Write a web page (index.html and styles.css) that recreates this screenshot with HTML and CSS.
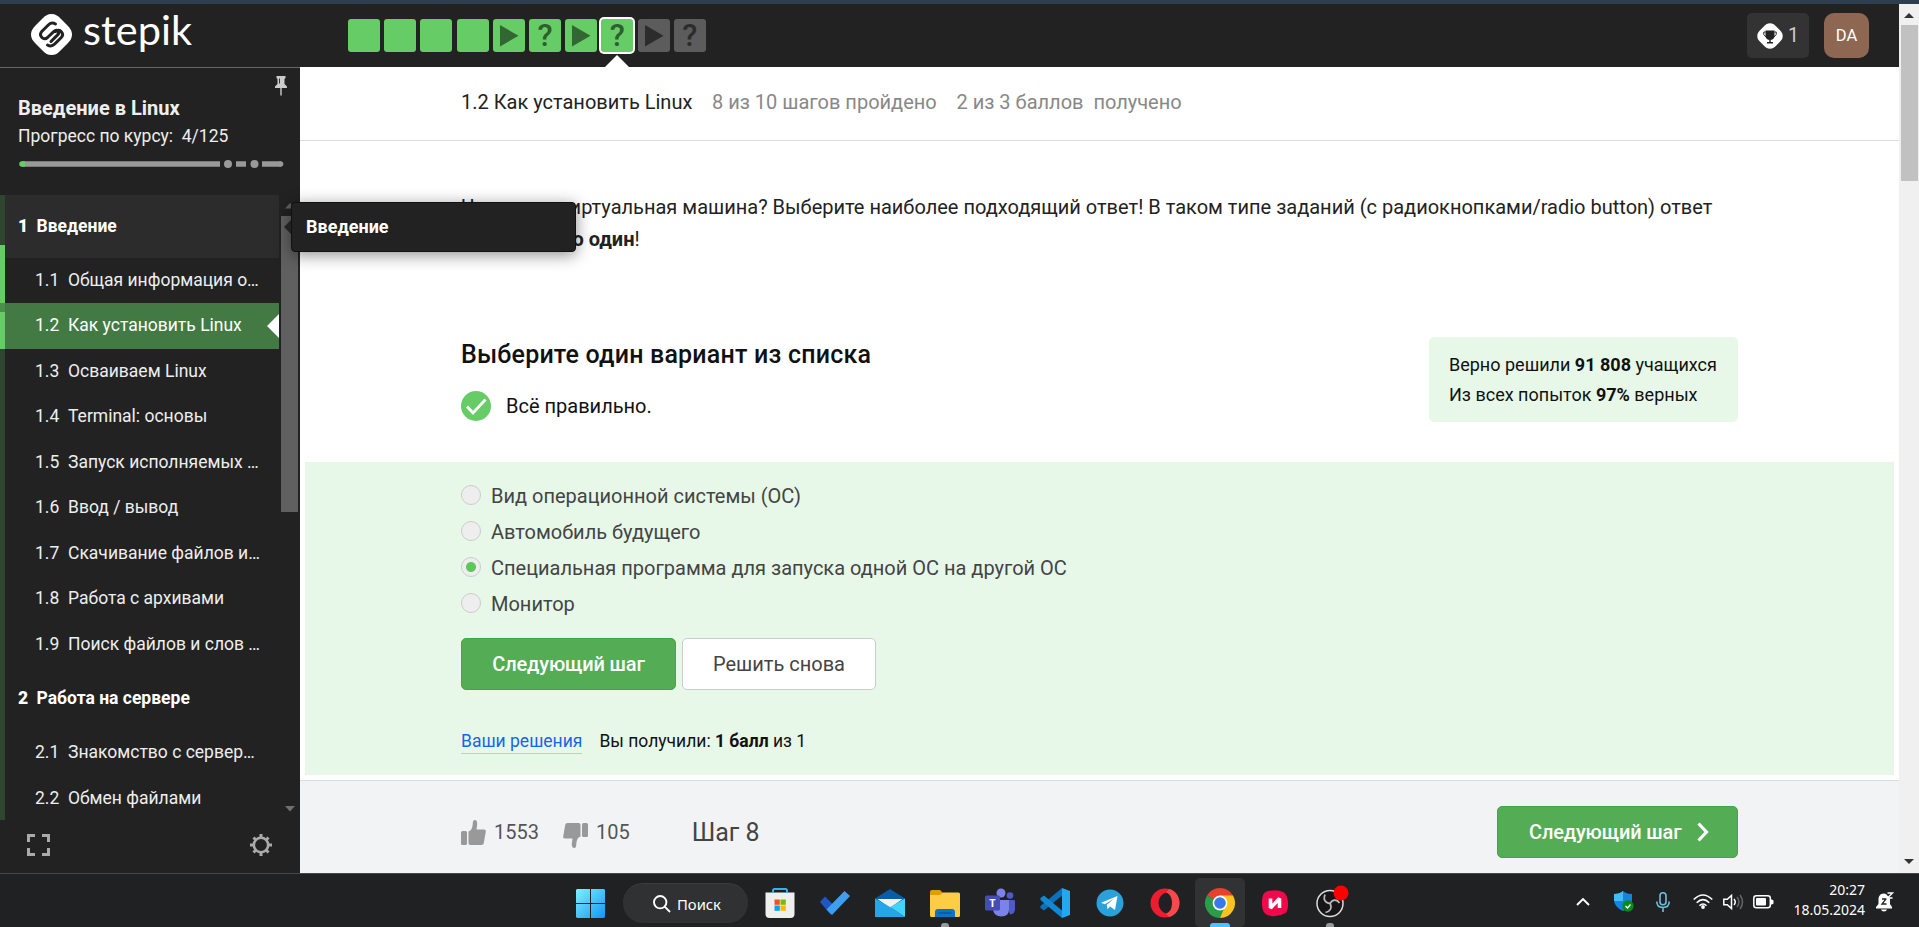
FILE: index.html
```html
<!DOCTYPE html>
<html lang="ru">
<head>
<meta charset="utf-8">
<title>Как установить Linux — Stepik</title>
<link rel="stylesheet" href="styles.css">
</head>
<body>
<div class="strip"></div>
<div class="window">
  <div class="app">
    <header class="topbar">
      <svg class="logo" width="180" height="56" viewBox="0 0 180 56">
        <g transform="translate(0 4)"><path d="M20.500 0c4 0 6 1.500 9 4.500l6.500 6.500c3 3 5 5.500 5 9.500s-2 6.500-5 9.500l-6.500 6.500c-3 3-5 4.500-9 4.500s-6-1.500-9-4.500l-6.500-6.500c-3-3-5-5.500-5-9.500s2-6.500 5-9.500l6.500-6.500c3-3 5-4.500 9-4.500z" fill="#fff"/>
        <path d="M24.500 10c-2.500-1.500-5.200-1-7.200 1l-6.300 6.300c-4 4.200 1.300 9.800 5.500 6.200l6.500-6.200c3-2.700 6.300.8 3.600 3.600l-6.600 6.600M16.500 31c2.500 1.500 5.200 1 7.200-1l6.300-6.300c4-4.200-1.300-9.800-5.500-6.200" fill="none" stroke="#222" stroke-width="3" stroke-linecap="round"/></g>
        <text class="wordmark" x="52" y="34.500" textLength="109" lengthAdjust="spacingAndGlyphs">stepik</text>
      </svg>
      <nav class="steps">
        <a class="step"></a><a class="step"></a><a class="step"></a><a class="step"></a>
        <a class="step"><svg width="32" height="33"><path d="M7 6v21.500L25.500 16.700z"/></svg></a>
        <a class="step">?</a>
        <a class="step"><svg width="32" height="33"><path d="M7 6v21.500L25.500 16.700z"/></svg></a>
        <a class="step current">?</a>
        <a class="step locked"><svg width="32" height="33"><path d="M7 6v21.500L25.500 16.700z"/></svg></a>
        <a class="step locked">?</a>
      </nav>
      <div class="account">
        <div class="score">
          <svg width="26" height="26" viewBox="0 0 26 26"><path d="M13 .3c2.500 0 4 1 5.500 2.500l4.700 4.700c1.500 1.500 2.500 3 2.500 5.500s-1 4-2.500 5.500l-4.700 4.700c-1.500 1.500-3 2.500-5.500 2.500s-4-1-5.500-2.500l-4.700-4.700C1.300 17 .3 15.500.3 13s1-4 2.500-5.500l4.700-4.700C9 1.300 10.500.3 13 .3z" fill="#fff"/><path d="M8.500 7.500h9v5c0 3-2 4.500-4.500 4.500s-4.500-1.500-4.500-4.500zM12.300 16h1.400v3h-1.400zM10 19h6v1.500h-6z" fill="#222"/><path d="M8.500 9H6.800v2.500L9 14M17.500 9h1.700v2.500L17 14" fill="none" stroke="#222"/></svg>
          <span>1</span>
        </div>
        <div class="avatar">DA</div>
      </div>
    </header>
    <div class="body">
      <aside class="sidebar">
        <div class="course">
          <svg class="pin" width="12" height="20" viewBox="0 0 12 20"><path d="M1.500 0h9v2l-1 1v5l2.500 2.500V12H0v-1.500L2.500 8V3l-1-1z" fill="#ccc"/><path d="M4.500 2.500v5" stroke="#333"/><path d="M6 12v7.500" stroke="#999" stroke-width="2"/></svg>
          <div class="course-title">Введение в Linux</div>
          <div class="course-progress">Прогресс по курсу: &nbsp;4/125</div>
          <svg class="bar" width="265" height="8"><path d="M3 4h198M217 4h10M243 4h19" stroke="#999" stroke-width="5.500"/><circle cx="3" cy="4" r="2.800" fill="#66cc66"/><circle cx="261.500" cy="4" r="2.800" fill="#999"/><path d="M3 4h3" stroke="#66cc66" stroke-width="5.500"/><circle cx="209" cy="4" r="4" fill="#999"/><circle cx="235.500" cy="4" r="4" fill="#999"/></svg>
        </div>
        <div class="toc">
          <div class="toc-list">
            <div class="section open"><b>1</b>Введение</div>
            <div class="lesson"><span>1.1</span>Общая информация о…</div>
            <div class="lesson active"><span>1.2</span>Как установить Linux</div>
            <div class="lesson"><span>1.3</span>Осваиваем Linux</div>
            <div class="lesson"><span>1.4</span>Terminal: основы</div>
            <div class="lesson"><span>1.5</span>Запуск исполняемых …</div>
            <div class="lesson"><span>1.6</span>Ввод / вывод</div>
            <div class="lesson"><span>1.7</span>Скачивание файлов и…</div>
            <div class="lesson"><span>1.8</span>Работа с архивами</div>
            <div class="lesson"><span>1.9</span>Поиск файлов и слов …</div>
            <div class="section"><b>2</b>Работа на сервере</div>
            <div class="lesson"><span>2.1</span>Знакомство с сервер…</div>
            <div class="lesson"><span>2.2</span>Обмен файлами</div>
            <i class="mark first"></i><i class="mark second"></i>
          </div>
          <div class="toc-scroll">
            <svg width="10" height="6"><path d="M0 5.500L5 0l5 5.500z" fill="#606060"/></svg>
            <div class="toc-thumb"></div>
            <svg width="10" height="6"><path d="M0 0h10L5 5.500z" fill="#707070"/></svg>
          </div>
        </div>
        <div class="tools">
          <svg width="23" height="22" viewBox="0 0 23 22"><path d="M1.500 8V1.500H8M15 1.500h6.500V8M21.500 14v6.500H15M8 20.500H1.500V14" fill="none" stroke="#aaa" stroke-width="3"/></svg>
          <svg width="22" height="22" viewBox="0 0 22 22"><g fill="none" stroke="#aaa"><circle cx="11" cy="11" r="7.200" stroke-width="2.600"/><path stroke-width="3" d="M11 3.500V0M11 18.500V22M3.500 11H0M18.500 11H22M5.700 5.700L3.500 3.500M16.300 5.700l2.200-2.200M5.700 16.300l-2.200 2.200M16.300 16.300l2.200 2.200"/></g></svg>
        </div>
        <div class="tooltip">Введение</div>
      </aside>
      <main class="main">
        <div class="lesson-head">
          <span class="lesson-name">1.2 Как установить Linux</span>
          <span class="stat-a">8 из 10 шагов пройдено</span>
          <span>2 из 3 баллов &nbsp;получено</span>
        </div>
        <p class="question">Что такое виртуальная машина? Выберите наиболее подходящий ответ! В таком типе заданий (с радиокнопками/radio button) ответ<br>будет <b>только один</b>!</p>
        <div class="task">
          <div>
            <h2 class="task-title">Выберите один вариант из списка</h2>
            <div class="verdict">
              <svg width="30" height="30"><circle cx="15" cy="15" r="15" fill="#66cc66"/><path d="M6 15.500l6 6.500L24.500 8.500" fill="none" stroke="#fff" stroke-width="2.800"/></svg>
              <span>Всё правильно.</span>
            </div>
          </div>
          <div class="stats">Верно решили <b>91 808</b> учащихся<br>Из всех попыток <b>97%</b> верных</div>
        </div>
        <div class="answer">
          <label class="option"><i class="radio"></i>Вид операционной системы (ОС)</label>
          <label class="option"><i class="radio"></i>Автомобиль будущего</label>
          <label class="option"><i class="radio on"></i>Специальная программа для запуска одной ОС на другой ОС</label>
          <label class="option"><i class="radio"></i>Монитор</label>
          <div class="buttons">
            <button class="btn primary first-btn">Следующий шаг</button>
            <button class="btn plain">Решить снова</button>
          </div>
          <div class="result"><a class="link">Ваши решения</a><span>Вы получили: <b>1 балл</b> из 1</span></div>
        </div>
        <footer class="foot">
          <svg width="25" height="25" viewBox="0 0 25 25" fill="#999"><rect y="11" width="6" height="14" rx="1.500"/><path d="M7.500 11.500c3-1 4-4 4.200-7.500C11.800 1 12.500 0 13.700 0c2 0 2.700 2 2.500 4.500L15.500 9.500H23c1.500 0 2 1 1.800 2l-2 11.500c-.3 1.200-1 2-2.300 2H9.500c-1.300 0-2-.7-2-2z"/></svg>
          <span class="votes up">1553</span>
          <svg width="25" height="25" viewBox="0 0 25 25" fill="#999" class="down"><rect y="11" width="6" height="14" rx="1.500"/><path d="M7.500 11.500c3-1 4-4 4.200-7.500C11.800 1 12.500 0 13.700 0c2 0 2.700 2 2.500 4.500L15.500 9.500H23c1.500 0 2 1 1.800 2l-2 11.500c-.3 1.200-1 2-2.300 2H9.500c-1.300 0-2-.7-2-2z"/></svg>
          <span class="votes">105</span>
          <span class="step-no">Шаг 8</span>
          <button class="btn primary next">Следующий шаг<svg width="12" height="20" viewBox="0 0 12 20"><path d="M1.500 1.500L9.500 10l-8 8.500" fill="none" stroke="#fff" stroke-width="3.200"/></svg></button>
        </footer>
      </main>
    </div>
  </div>
  <div class="page-scroll">
    <svg width="10" height="5"><path d="M0 5L5 0l5 5z" fill="#333"/></svg>
    <div class="page-thumb"></div>
    <svg width="10" height="5"><path d="M0 0h10L5 5z" fill="#333"/></svg>
  </div>
</div>
<div class="taskbar">
  <svg class="start" width="29" height="29" viewBox="0 0 29 29"><defs><linearGradient id="w" x2="1" y2="1"><stop offset="0" stop-color="#7ff0ff"/><stop offset="1" stop-color="#1296f3"/></linearGradient></defs><path d="M1 0h13v14H0V1zM15 0h13l1 1v13H15zM0 15h14v14H1l-1-1zM15 15h14v13l-1 1H15z" fill="url(#w)"/></svg>
  <div class="search"><svg width="18" height="18" viewBox="0 0 18 18"><g fill="none" stroke="#fff" stroke-width="1.900"><circle cx="7.200" cy="7.200" r="6.200"/><path d="M11.700 11.700l5.300 5.300"/></g></svg>Поиск</div>
  <div class="apps">
    <div class="app-cell"><svg width="30" height="30" viewBox="0 0 30 30"><path d="M.5 4.500h29V26q0 4-4 4H4.500q-4 0-4-4z" fill="#efefef"/><path d="M8 5V2.500Q8 1 9.500 1h11Q22 1 22 2.500V5" fill="none" stroke="#31b5f0" stroke-width="2"/><path d="M9.500 11.500h5.300v5.300H9.500z" fill="#f25022"/><path d="M15.500 11.500h5.300v5.300h-5.300z" fill="#7fba00"/><path d="M9.500 17.500h5.300v5.300H9.500z" fill="#00a4ef"/><path d="M15.500 17.500h5.300v5.300h-5.300z" fill="#ffb900"/></svg></div>
    <div class="app-cell"><svg width="30" height="30" viewBox="0 0 30 30"><path d="M0 14l5-5.500 9 9-3.500 9z" fill="#1d58c4"/><path d="M12 27l-5.500-5.500L24.500 3 30 8z" fill="#3e9ff0"/></svg></div>
    <div class="app-cell"><svg width="30" height="30" viewBox="0 0 30 30"><path d="M0 10.500L15 1l15 9.500v5H0z" fill="#0a5ba8"/><path d="M2.500 11h25L15 20z" fill="#f2f2f2"/><path d="M0 10.500L15 19l15 10H0z" fill="#25a6e8"/><path d="M30 10.500V29L15 19z" fill="#43d2f8"/></svg></div>
    <div class="app-cell open-app"><svg width="30" height="30" viewBox="0 0 30 30"><path d="M0 4q0-2 2-2h8l3 3v8H0z" fill="#e19c0b"/><path d="M0 7h10l3-2.500h15.500q1.500 0 1.500 1.500v21.500q0 1.500-1.500 1.500h-27Q0 29 0 27.500z" fill="#fdce45"/><path d="M5 29v-5q0-3 3-3h14q3 0 3 3v5z" fill="#0b75c5"/><path d="M8.500 25h13" stroke="#064f93" stroke-width="1.300"/></svg></div>
    <div class="app-cell"><svg width="30" height="30" viewBox="0 0 30 30"><circle cx="25" cy="7.500" r="3.300" fill="#5059c9"/><path d="M20 12h9q1 0 1 1v8q0 5-5 5.500z" fill="#5059c9"/><circle cx="16" cy="5" r="4.500" fill="#7b83eb"/><path d="M8 12h16v10q-.5 6.500-7.500 6.500T8 22z" fill="#7b83eb"/><rect y="7.500" width="15" height="15" rx="1.500" fill="#454cb2"/><text x="7.500" y="19" text-anchor="middle" class="teams-t">T</text></svg></div>
    <div class="app-cell"><svg width="30" height="30" viewBox="0 0 30 30"><path d="M22 7.500L4 22.500.5 20v-2L22 0z" fill="#0a72bd"/><path d="M22 22.500L4 7.500.5 10v2L22 30z" fill="#1088d4"/><path d="M22 0l8 3v24l-8 3z" fill="#24a6f0"/></svg></div>
    <div class="app-cell"><svg width="30" height="30" viewBox="0 0 30 30"><circle cx="15" cy="15" r="13.500" fill="#2aa1da"/><path d="M6 14.700L22.500 8 20 22l-5-3.500-2.500 2.700-.7-4.500 7-6-9 5.500z" fill="#fff"/></svg></div>
    <div class="app-cell"><svg width="30" height="30" viewBox="0 0 30 30"><path fill-rule="evenodd" d="M15 .5a14.500 14.500 0 100 29 14.500 14.500 0 000-29zm2 4c3.500 0 5.500 4.500 5.500 10.500s-2 10.500-5.500 10.500S8.500 21 8.500 15 13.500 4.500 17 4.500z" fill="#ed1c2e"/><path d="M19 1c14 3 14 25 0 28l-3-3.500c8-2 8-19 0-21z" fill="#f9484d"/></svg></div>
    <div class="app-cell focused"><svg width="30" height="30" viewBox="0 0 30 30"><path d="M15 15L2 7.500A15 15 0 0128 7.500z" fill="#e8402f"/><path d="M15 15L2 7.500A15 15 0 0015 30l6.500-11z" fill="#2b9c4a"/><path d="M15 15h6.500L15 30A15 15 0 0028 7.500H15z" fill="#fcc31e"/><circle cx="15" cy="15" r="7.400" fill="#fff"/><circle cx="15" cy="15" r="5.800" fill="#3879ea"/></svg></div>
    <div class="app-cell"><svg width="26" height="26" viewBox="0 0 26 26"><path d="M7 .8Q16-.8 22 2.500q3.500 3 4 10t-2.500 10.500Q17 27 9 26 2 25 .6 19T.5 7Q1.500 1.500 7 .8z" fill="#f0094b"/><path d="M8.500 8.500v9.500L17.500 8.500V18" fill="none" stroke="#fff" stroke-width="3.600" stroke-linejoin="bevel"/></svg></div>
    <div class="app-cell open-app"><svg class="obs" width="30" height="30" viewBox="0 0 30 30"><circle cx="15" cy="15.500" r="13" fill="#171517" stroke="#ddd" stroke-width="1.500"/><path d="M15 15.500c-5-.5-7-4-5-9M15 15.500c2.500-4.500 7-4.500 9.500-.5M15 15.500c2.500 4.500 0 8-4.500 9" fill="none" stroke="#bbb" stroke-width="1.700"/><circle cx="26" cy="5" r="7.500" fill="#f00"/></svg></div>
  </div>
  <div class="tray">
    <svg width="14" height="9"><path d="M1 8l6-6 6 6" fill="none" stroke="#fff" stroke-width="1.900"/></svg>
    <svg class="t-shield" width="20" height="21" viewBox="0 0 20 21"><path d="M0 3q6 0 9-3 3 3 9 3v6q0 7-9 11Q0 16 0 9z" fill="#1683dd"/><path d="M0 3q6 0 9-3v10H0z" fill="#42bcf5"/><circle cx="14" cy="15" r="5.700" fill="#0b8a1c"/><path d="M11.500 15l2 2 3-3.500" fill="none" stroke="#fff" stroke-width="1.300"/></svg>
    <svg class="t-mic" width="14" height="20" viewBox="0 0 14 20"><g fill="none" stroke="#6ec1dc" stroke-width="1.600"><rect x="4" y=".8" width="6" height="12" rx="3"/><path d="M.8 9.500q0 6 6.200 6t6.200-6M7 15.500V20"/></g></svg>
    <svg class="t-wifi" width="20" height="15" viewBox="0 0 20 15"><g fill="none" stroke="#fff" stroke-width="1.600"><path d="M.7 5.500q9.300-9 18.600 0M3.700 8.700q6.300-6.200 12.600 0M6.500 11.700q3.500-3.500 7 0"/></g><circle cx="10" cy="13" r="1.900" fill="#fff"/></svg>
    <svg class="t-sound" width="20" height="16" viewBox="0 0 20 16"><g fill="none" stroke-width="1.500"><path d="M.8 5.300h3.500L8.500 1.500v13l-4.200-3.800H.8z" stroke="#fff"/><path d="M11 5q2.500 3 0 6" stroke="#fff"/><path d="M14 3q4 5 0 10M17 1q5 7 0 14" stroke="#666"/></g></svg>
    <svg class="t-battery" width="21" height="14" viewBox="0 0 21 14"><rect x=".8" y=".8" width="16.500" height="12" rx="2.500" fill="none" stroke="#fff" stroke-width="1.500"/><rect x="3" y="3" width="10" height="7.600" rx="1" fill="#fff"/><path d="M18 4.500h1l1.500 1v3L19 9.500h-1z" fill="#fff"/></svg>
    <div class="clock">20:27<br>18.05.2024</div>
    <svg class="t-bell" width="19" height="20" viewBox="0 0 19 20"><path d="M8 1.500c-4 0-5.500 3-5.500 6V12L0 15v1.500h16V15l-2-3V6.500L10 2zM5 17.500h6q-.5 2-3 2t-3-2z" fill="#fff"/><path d="M6 7h4l-4 5h4.500" fill="none" stroke="#222" stroke-width="1.300"/><path d="M11.500 1h5l-5 5h5" fill="none" stroke="#fff" stroke-width="1.400"/></svg>
  </div>
</div>
</body>
</html>
```
FILE: styles.css
```css
* { box-sizing: border-box; }
body { margin: 0; width: 1919px; height: 927px; overflow: hidden; display: flex; flex-direction: column; font-family: Roboto, "Noto Sans", sans-serif; background: #fff; color: #222; }
svg { display: block; flex: none; overflow: visible; }
.strip { height: 4px; background: #2c3e50; }
.window { height: 869px; display: flex; }
.app { width: 1899px; display: flex; flex-direction: column; }

.topbar { height: 63px; background: #222; display: flex; align-items: flex-start; padding: 6px 30px 0 31px; }
.wordmark { font-family: Lato, sans-serif; font-size: 40px; fill: #fff; }
.steps { display: flex; gap: 4.200px; margin: 9px 0 0 137px; }
.step { position: relative; width: 32px; height: 33px; border-radius: 3px; background: #66cc66; color: #2d5f2f; fill: #336633; font-size: 31px; font-weight: 500; line-height: 34px; text-align: center; }
.step.current { box-shadow: 0 0 0 2px #fff; }
.step.current::after { content: ""; position: absolute; left: 4px; top: 36px; border: 12px solid transparent; border-top: 0; border-bottom-color: #fff; }
.step.locked { background: #5c5c5c; color: #2c2c2c; fill: #2c2c2c; }
.account { margin: 3px 0 0 auto; display: flex; gap: 15px; }
.score { width: 62px; height: 45px; border-radius: 5px; background: #333; display: flex; align-items: center; padding-left: 10px; gap: 5px; color: #ccc; font-size: 19.500px; }
.avatar { width: 45px; height: 45px; border-radius: 10px; background: #8d6752; color: #fff; font-size: 16.500px; line-height: 46px; text-align: center; }

.body { height: 806px; display: flex; }
.sidebar { position: relative; width: 300px; background: #222; color: #eee; display: flex; flex-direction: column; border-top: 1px solid #666; }
.course { height: 127px; padding: 27px 0 0 18px; position: relative; }
.pin { position: absolute; left: 275px; top: 8px; }
.course-title { font-size: 20px; font-weight: 700; line-height: 26px; }
.course-progress { font-size: 17.500px; line-height: 28px; margin-top: 1px; }
.bar { margin: 10px 0 0 1px; }
.toc { height: 625px; display: flex; }
.toc-list { position: relative; width: 279px; overflow: hidden; padding-left: 5px; background: linear-gradient(90deg, #30452f 5px, transparent 5px); font-size: 17.500px; }
.section { height: 63px; line-height: 62px; padding-left: 13px; font-weight: 700; color: #fff; display: flex; white-space: nowrap; }
.section b { width: 18.500px; }
.section.open { height: 62.600px; background: #2c2c2c; }
.lesson { height: 45.500px; line-height: 45px; padding-left: 30px; display: flex; white-space: nowrap; position: relative; }
.lesson span { width: 33px; }
.lesson.active { background: #437a43; color: #fff; }
.lesson.active::after { content: ""; position: absolute; right: 0; top: 11px; border: 12px solid transparent; border-left: 0; border-right-color: #fff; }
.mark { position: absolute; left: 0; width: 5px; background: #66cc66; }
.mark.first { top: 50px; height: 58px; }
.mark.second { top: 117px; height: 37px; box-shadow: 0 -9px #4a8f4a; }
.toc-scroll { width: 21px; display: flex; flex-direction: column; align-items: center; padding: 8px 0; }
.toc-thumb { width: 17px; height: 296px; background: #606060; margin: 7px 0 auto; }
.tools { display: flex; justify-content: space-between; padding: 14px 28px 0 27px; }
.tooltip { position: absolute; left: 291px; top: 134px; width: 285px; height: 50px; border-radius: 4px; border: 1px solid #111; background: #222; color: #fff; font-size: 18px; font-weight: 700; line-height: 48px; padding-left: 14px; box-shadow: 0 3px 16px rgba(0,0,0,.45); z-index: 2; }
.tooltip::before { content: ""; position: absolute; left: -8px; top: 17px; border: 7px solid transparent; border-left: 0; border-right-color: #222; }

.main { width: 1599px; display: flex; flex-direction: column; background: #fff; }
.lesson-head { height: 74px; border-bottom: 1px solid #ddd; padding-left: 161px; display: flex; line-height: 70px; font-size: 20px; color: #888; white-space: pre; }
.lesson-name { width: 251px; color: #222; }
.stat-a { width: 244.500px; }
.question { margin: 50px 0 0 161px; font-size: 20px; line-height: 32px; height: 64px; white-space: nowrap; }
.task { display: flex; justify-content: space-between; margin-top: 82px; padding: 0 161px; height: 125px; }
.task-title { margin: 0; font-size: 25px; font-weight: 500; line-height: 36px; letter-spacing: .2px; color: #111; }
.verdict { display: flex; align-items: center; gap: 15px; margin-top: 18px; font-size: 20px; color: #111; }
.stats { width: 309px; height: 85px; background: #e7f8e9; border-radius: 5px; padding: 13px 0 0 20px; font-size: 18px; line-height: 30px; color: #111; white-space: nowrap; }
.answer { margin: 0 5px; height: 313px; background: #e7f8e9; padding: 16px 0 0 156px; }
.option { height: 36px; display: flex; align-items: center; font-size: 20px; color: #444; }
.radio { width: 20px; height: 20px; border: 1px solid #ccc; border-radius: 50%; background: #eee; margin: -2px 10px 0 0; }
.radio.on { background: radial-gradient(circle, #5bc85b 4.500px, #eee 5.500px); }
.buttons { display: flex; gap: 6px; margin-top: 16px; }
.btn { height: 52px; border: 1px solid #3fa845; border-radius: 5px; font: 20px Roboto, sans-serif; padding: 0; text-align: center; }
.primary { background: #54ad54; color: #fff; font-weight: 500; letter-spacing: -.15px; }
.first-btn { width: 215px; }
.plain { width: 194px; border-color: #ccc; background: #fff; color: #444; }
.result { display: flex; gap: 17px; margin-top: 39px; font-size: 17.500px; line-height: 24px; color: #111; }
.link { color: #1665e8; border-bottom: 1px solid #a9d3f5; }
.foot { margin-top: 5px; height: 93px; border-top: 1px solid #ddd; background: #f2f3f5; display: flex; align-items: center; padding: 10px 161px 0; color: #555; }
.votes { font-size: 20px; margin-left: 8px; }
.up { width: 69px; }
.down { transform: rotate(180deg); margin-top: 6px; }
.step-no { margin-left: 62px; font-size: 25px; color: #444; }
.next { width: 241px; margin-left: auto; display: flex; align-items: center; padding-left: 31px; gap: 16px; }
.page-scroll { width: 20px; background: #f0f0f0; display: flex; flex-direction: column; align-items: center; padding: 9px 0; }
.page-thumb { width: 17px; height: 156px; background: #c1c1c1; margin: 7px 0 auto 1px; }

.taskbar { height: 54px; background: #202122; border-top: 1px solid #454748; display: flex; color: #fff; font-family: "Noto Sans", sans-serif; }
.start { margin: 15px 0 0 576px; }
.search { width: 125px; height: 40px; margin: 9px 4px 0 18px; border-radius: 20px; background: #303132; border-top: 1px solid #3c3d3e; display: flex; align-items: center; padding-left: 30px; gap: 6px; font-size: 14.800px; }
.apps { display: flex; }
.app-cell { position: relative; width: 50px; height: 49px; margin: 4px 2.500px 0; display: flex; align-items: center; justify-content: center; }
.app-cell::after { content: ""; position: absolute; bottom: 0; border-radius: 3px 3px 0 0; }
.open-app::after { width: 8px; height: 4px; background: #999; }
.focused { background: #303234; border-radius: 5px; }
.focused::after { width: 20px; height: 4px; background: #4cc2ff; }
.teams-t { font: 700 11px "Open Sans", sans-serif; fill: #fff; }
.tray { margin: 0 24px 0 auto; display: flex; align-items: center; padding-top: 2px; }
.t-shield { margin-left: 24px; }
.t-mic { margin-left: 22px; }
.t-wifi { margin-left: 23px; }
.t-sound { margin-left: 10px; }
.t-battery { margin-left: 10px; }
.clock { width: 91px; text-align: right; font-size: 14px; line-height: 20px; margin-top: -3px; }
.t-bell { margin-left: 11px; }
```
